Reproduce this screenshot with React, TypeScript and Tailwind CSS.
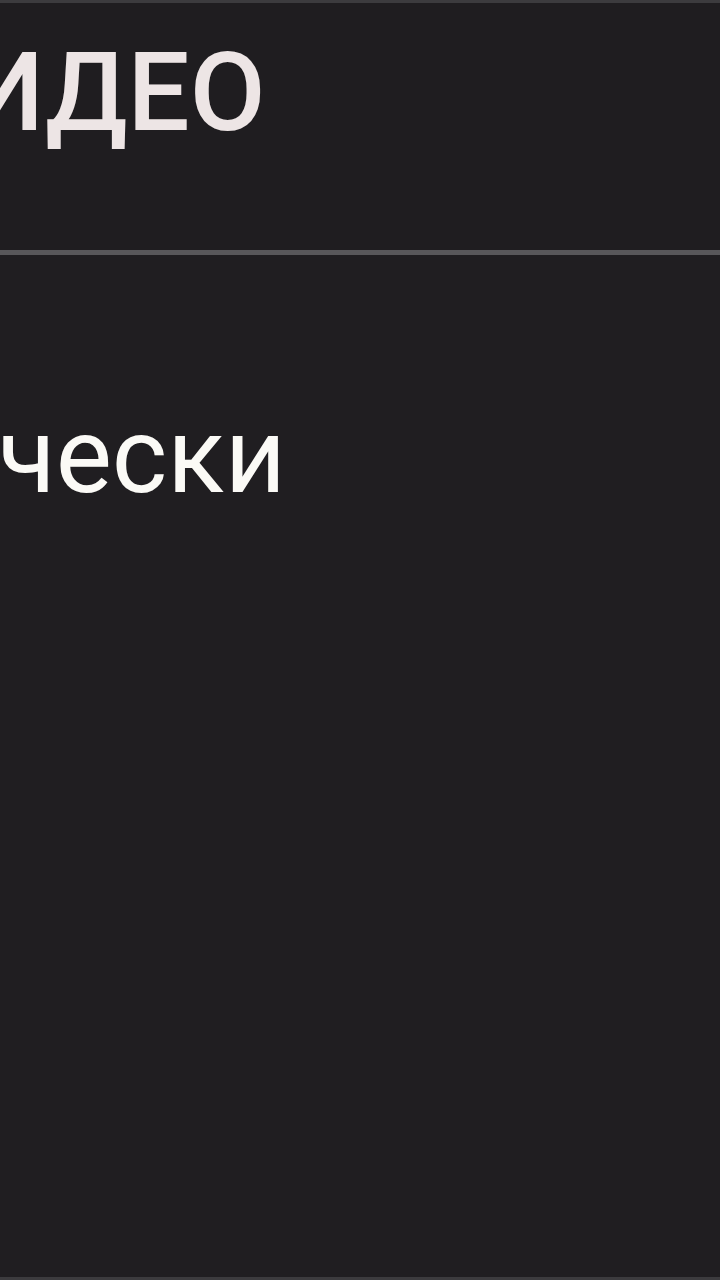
import React from 'react';

const App: React.FC = () => {
  return (
    <div className="h-[1280px] w-[720px] overflow-hidden bg-[#201e21] flex flex-col border-t-[3px] border-b-[3px] border-[#3c3b3e]" style={{ fontFamily: 'Roboto, "Noto Sans", sans-serif' }}>
      {/* section header */}
      <div className="h-[247px] shrink-0 bg-[#1f1d20] pt-[35px] overflow-hidden whitespace-nowrap">
        <h2 className="ml-[-103px] text-[110px] leading-none font-medium text-[#ede5e5]">ВИДЕО</h2>
      </div>
      <div className="h-[5px] shrink-0 bg-[#58575a]" />

      {/* setting row */}
      <div className="pt-[148px] overflow-hidden whitespace-nowrap">
        <span className="block ml-[-488px] text-[106px] leading-none font-normal text-[#fbfaf6]">Автоматически</span>
      </div>
      <div className="flex-1" />
    </div>
  );
};

export default App;
